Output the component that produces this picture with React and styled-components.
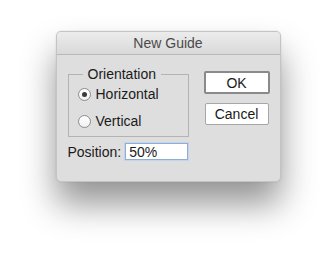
import React, { useState } from "react";
import styled, { createGlobalStyle } from "styled-components";

const Global = createGlobalStyle`
  html, body {
    margin: 0;
    background: #ffffff;
  }
  body {
    font-family: "Liberation Sans", Arial, sans-serif;
    font-size: 14px;
    color: #1a1a1a;
  }
`;

const Page = styled.div`
  width: 336px;
  height: 262px;
  display: flex;
  justify-content: center;
  padding-top: 31px;
  box-sizing: border-box;
  overflow: hidden;
`;

const Window = styled.div`
  width: 225px;
  height: 151px;
  box-sizing: border-box;
  border: 1px solid #c4c4c4;
  border-radius: 5px;
  background: #dedede;
  box-shadow: 0 22px 34px rgba(0, 0, 0, 0.42), 0 0 2px rgba(0, 0, 0, 0.12);
  display: flex;
  flex-direction: column;
  overflow: hidden;
`;

const TitleBar = styled.div`
  height: 22px;
  flex: none;
  display: flex;
  align-items: center;
  justify-content: center;
  background: linear-gradient(#ececec, #d9d9d9);
  border-bottom: 1px solid #b8b8b8;
  color: #4a4a4a;
  font-size: 14px;
`;

const Body = styled.div`
  flex: 1;
  padding: 11px 10px 0 11px;
  display: flex;
  flex-direction: column;
`;

const TopRow = styled.div`
  display: flex;
  align-items: flex-start;
`;

const Group = styled.fieldset`
  width: 121px;
  height: 71px;
  box-sizing: border-box;
  margin: 0;
  padding: 2px 0 0 9px;
  border: 1px solid #b3b3b3;
  display: flex;
  flex-direction: column;
  gap: 7px;
`;

const Legend = styled.legend`
  margin-left: 5px;
  padding: 0 5px;
  color: #1a1a1a;
  line-height: 16px;
`;

const Option = styled.label`
  display: flex;
  align-items: center;
  gap: 5px;
  height: 20px;
  cursor: default;
`;

const Radio = styled.span`
  width: 13px;
  height: 13px;
  box-sizing: border-box;
  border-radius: 50%;
  border: 1px solid #8c8c8c;
  background: linear-gradient(#ffffff, #f1f1f1);
  display: flex;
  align-items: center;
  justify-content: center;

  &::after {
    content: "";
    width: 5px;
    height: 5px;
    border-radius: 50%;
    background: ${(p) => (p.checked ? "#3a3a3a" : "transparent")};
  }
`;

const Buttons = styled.div`
  margin-left: auto;
  margin-top: 5px;
  display: flex;
  flex-direction: column;
  gap: 9px;
`;

const Button = styled.button`
  width: ${(p) => (p.primary ? "66px" : "64px")};
  height: ${(p) => (p.primary ? "23px" : "22px")};
  margin-left: ${(p) => (p.primary ? "0" : "1px")};
  box-sizing: border-box;
  padding: 0;
  font-family: "Liberation Sans", Arial, sans-serif;
  font-size: 14px;
  color: #1a1a1a;
  background: #ffffff;
  border: ${(p) => (p.primary ? "2px solid #8a8a8a" : "1px solid #a6a6a6")};
  border-radius: 2px;
`;

const PositionRow = styled.div`
  margin-top: 6px;
  display: flex;
  align-items: center;
  gap: 4px;
`;

const Input = styled.input`
  width: 63px;
  height: 17px;
  box-sizing: border-box;
  padding: 0 0 0 3px;
  font-family: "Liberation Sans", Arial, sans-serif;
  font-size: 14px;
  color: #1a1a1a;
  background: #ffffff;
  border: 1px solid #8eaed6;
  outline: none;
  box-shadow: 0 0 0 1px #c3d5ec;
`;

export default function App() {
  const [orient, setOrient] = useState("h");
  const [pos, setPos] = useState("50%");
  return (
    <>
      <Global />
      <Page>
        <Window>
          <TitleBar>New Guide</TitleBar>
          <Body>
            <TopRow>
              <Group>
                <Legend>Orientation</Legend>
                <Option onClick={() => setOrient("h")}>
                  <Radio checked={orient === "h"} />
                  Horizontal
                </Option>
                <Option onClick={() => setOrient("v")}>
                  <Radio checked={orient === "v"} />
                  Vertical
                </Option>
              </Group>
              <Buttons>
                <Button primary>OK</Button>
                <Button>Cancel</Button>
              </Buttons>
            </TopRow>
            <PositionRow>
              <span>Position:</span>
              <Input value={pos} onChange={(e) => setPos(e.target.value)} />
            </PositionRow>
          </Body>
        </Window>
      </Page>
    </>
  );
}
